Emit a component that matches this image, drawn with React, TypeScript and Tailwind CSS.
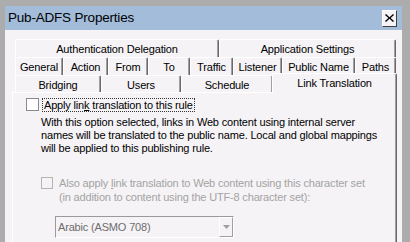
import React from "react";

type TabProps = { label: string; cls: string };

function Tab({ label, cls }: TabProps) {
  return (
    <div
      className={`${cls} h-[18px] shrink-0 flex items-center justify-center pt-[1px] border-t border-l border-t-white border-l-white border-r border-r-[#696969] shadow-[inset_-1px_0_0_#a0a0a0] rounded-tl-[2px] rounded-tr-[2px] text-[11px] leading-none tracking-[-0.15px] text-black`}
    >
      {label}
    </div>
  );
}

export default function App() {
  return (
    <div className="w-[410px] h-[242px] overflow-hidden bg-[#acacac] pt-[6px] pl-[5px] font-['Liberation_Sans',Arial,sans-serif]">
      <div className="w-[397px] h-[300px] bg-[#f5f3f6] flex flex-col">
        {/* title bar */}
        <div className="h-[24px] bg-[#a2bcda] flex items-center justify-between pl-[3px] pr-[5px]">
          <span className="text-[13.5px] leading-none text-black tracking-[-0.2px]">Pub-ADFS Properties</span>
          <div className="w-[15px] h-[17px] bg-[#f5f3f6] border border-t-white border-l-white border-r-[#404040] border-b-[#404040] flex items-center justify-center">
            <svg width="9" height="8" viewBox="0 0 9 8">
              <path d="M1 0 L4.5 3.2 L8 0 L9 1 L5.6 4 L9 7 L8 8 L4.5 4.8 L1 8 L0 7 L3.4 4 L0 1 Z" fill="#000" />
            </svg>
          </div>
        </div>
        {/* body */}
        <div className="pl-[7px] pt-[9px] flex flex-col">
          <div className="pl-[3px] flex flex-col">
            <div className="flex">
              <Tab label="Authentication Delegation" cls="w-[204px]" />
              <Tab label="Application Settings" cls="w-[177px]" />
            </div>
            <div className="flex">
              <Tab label="General" cls="w-[48px]" />
              <Tab label="Action" cls="w-[45px]" />
              <Tab label="From" cls="w-[40px]" />
              <Tab label="To" cls="w-[42px]" />
              <Tab label="Traffic" cls="w-[43px]" />
              <Tab label="Listener" cls="w-[49px]" />
              <Tab label="Public Name" cls="w-[73px]" />
              <Tab label="Paths" cls="w-[41px]" />
            </div>
            <div className="flex h-[17px] items-start">
              <Tab label="Bridging" cls="w-[86px]" />
              <Tab label="Users" cls="w-[80px]" />
              <Tab label="Schedule" cls="w-[92px]" />
              <div className="relative z-10 -ml-[1px] -mt-[2px] w-[125px] h-[20px] shrink-0 flex items-start pt-[4px] justify-center bg-[#f5f3f6] border-t border-l border-t-white border-l-white border-r border-r-[#696969] shadow-[inset_-1px_0_0_#a0a0a0] rounded-tl-[2px] rounded-tr-[2px] text-[11px] leading-none tracking-[-0.15px] text-black">
                Link Translation
              </div>
            </div>
          </div>
          {/* panel */}
          <div className="w-[385px] h-[160px] border-t border-l border-white border-r border-r-[#696969] shadow-[inset_-1px_0_0_#a0a0a0] pt-[5px] pl-[13px] text-[11px] leading-[13px] tracking-[-0.17px] text-black">
            <div className="flex items-center h-[13px]">
              <div className="w-[13px] h-[13px] bg-white border border-[#8a8a8a] shrink-0" />
              <span className="ml-[3px] px-[1px] h-[14px] leading-[12px] border border-dotted border-[#333]">
                Apply lin<span className="underline">k</span> translation to this rule
              </span>
            </div>
            <div className="mt-[5px] pl-[15px] whitespace-nowrap">
              <div>With this option selected, links in Web content using internal server</div>
              <div>names will be translated to the public name. Local and global mappings</div>
              <div>will be applied to this publishing rule.</div>
            </div>
            <div className="mt-[21px] pl-[15px] flex items-start text-[#a3a3a3] whitespace-nowrap">
              <div className="mt-[1px] w-[12px] h-[12px] border border-[#b5b5b5] bg-[#f5f3f6] shrink-0" />
              <div className="ml-[6px] leading-[14px]">
                <div>
                  Also apply <span className="underline">l</span>ink translation to Web content using this character set
                </div>
                <div>(in addition to content using the UTF-8 character set):</div>
              </div>
            </div>
            <div className="mt-[12px] ml-[29px] w-[179px] h-[22px] flex border border-t-[#9a9a9a] border-l-[#9a9a9a] border-r-white border-b-white bg-[#f5f3f6]">
              <div className="flex-1 flex items-center pl-[2px] text-[#6d6d6d] text-[11px]">Arabic (ASMO 708)</div>
              <div className="w-[14px] h-full flex items-center justify-center border border-t-white border-l-white border-r-[#a0a0a0] border-b-[#a0a0a0]">
                <svg width="7" height="4" viewBox="0 0 7 4">
                  <path d="M0 0 H7 L3.5 4 Z" fill="#a0a0a0" />
                </svg>
              </div>
            </div>
          </div>
        </div>
      </div>
    </div>
  );
}
